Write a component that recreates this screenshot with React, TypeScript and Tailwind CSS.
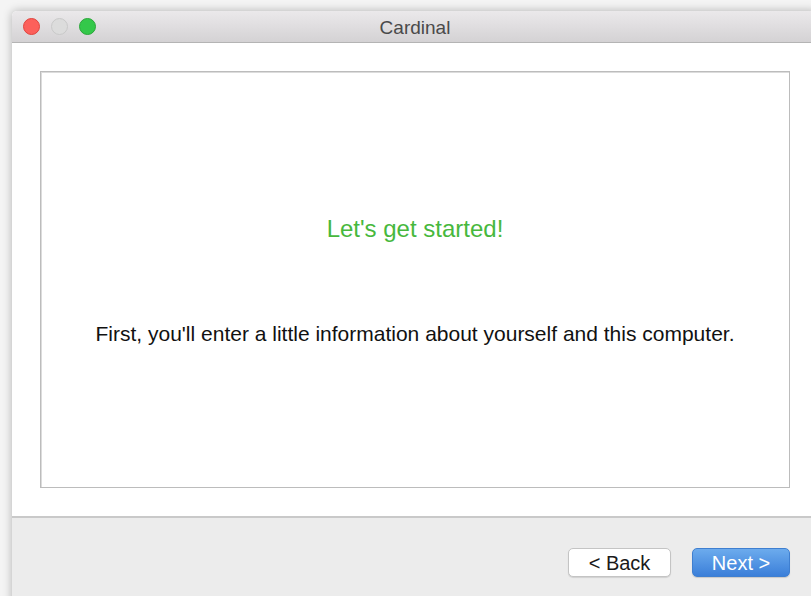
import React from 'react';

const font = { fontFamily: '"Liberation Sans", Arial, sans-serif' };

const TrafficLights: React.FC = () => (
  <div className="absolute left-0 top-0 flex h-full items-center gap-[11px] pl-[11px]">
    <span className="block h-[17px] w-[17px] rounded-full border border-[#e0443e] bg-[#fc605b]" />
    <span className="block h-[17px] w-[17px] rounded-full border border-[#c9c9c9] bg-[#dcdcdc]" />
    <span className="block h-[17px] w-[17px] rounded-full border border-[#2ba63a] bg-[#34c84a]" />
  </div>
);

export default function App() {
  return (
    <div className="h-[596px] w-[811px] overflow-hidden bg-[#f4f4f4] pl-[12px] pt-[11px]" style={font}>
      <div className="relative flex h-[640px] w-[806px] flex-col rounded-t-[5px] bg-white shadow-[0_0_10px_rgba(0,0,0,0.28)]">
        {/* title bar */}
        <div className="relative flex h-[32px] items-center justify-center rounded-t-[5px] border-b border-[#b4b4b4] bg-gradient-to-b from-[#ebe9eb] to-[#d4d2d4] pt-[2px]">
          <TrafficLights />
          <span className="text-[19px] leading-none text-[#4a4a4a]">Cardinal</span>
        </div>

        {/* page body */}
        <div className="bg-white px-[28px] pb-[28px] pt-[28px]">
          <div className="flex h-[417px] flex-col items-center justify-center gap-[78px] border border-[#bcbcbc] pt-[2px] shadow-[inset_1px_1px_0_#dcdcdc]">
            <div className="text-[24px] leading-[28px] text-[#47b83d]">Let's get started!</div>
            <div className="text-[21px] leading-[25px] text-[#111111]">
              First, you'll enter a little information about yourself and this computer.
            </div>
          </div>
        </div>

        {/* button bar */}
        <div className="flex flex-1 justify-end gap-[21px] border-t-2 border-[#c9c9c9] bg-[#ececec] pr-[28px] pt-[30px]">
          <button className="h-[29px] w-[103px] rounded-[5px] border border-[#c4c4c4] bg-white text-[20px] leading-none text-[#1a1a1a] shadow-[0_1px_1px_rgba(0,0,0,0.12)]">
            &lt; Back
          </button>
          <button className="h-[29px] w-[98px] rounded-[5px] border border-[#3f7fd0] bg-gradient-to-b from-[#6cabed] to-[#3b7fd9] text-[20px] leading-none text-white shadow-[0_1px_1px_rgba(0,0,0,0.15)]">
            Next &gt;
          </button>
        </div>
      </div>
    </div>
  );
}
